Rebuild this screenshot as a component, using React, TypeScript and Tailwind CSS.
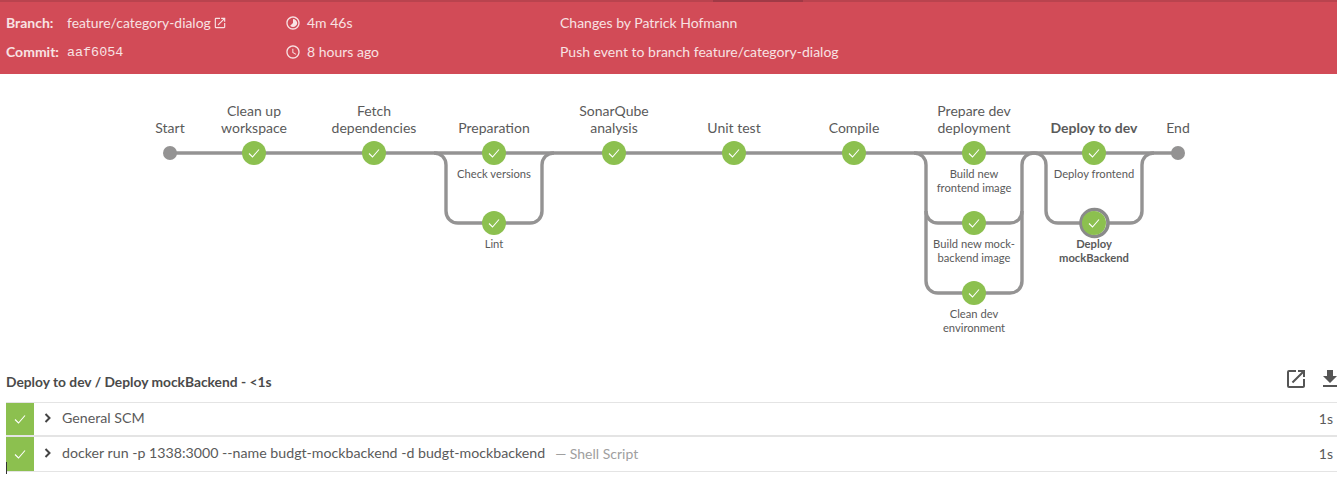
import React from "react";
import { MdAccessTime, MdFileDownload, MdOpenInNew, MdTimelapse } from "react-icons/md";

const stages = [
  { x: 170, label: ["Start"] },
  { x: 254, label: ["Clean up", "workspace"] },
  { x: 374, label: ["Fetch", "dependencies"] },
  { x: 494, label: ["Preparation"] },
  { x: 614, label: ["SonarQube", "analysis"] },
  { x: 734, label: ["Unit test"] },
  { x: 854, label: ["Compile"] },
  { x: 974, label: ["Prepare dev", "deployment"] },
  { x: 1094, label: ["Deploy to dev"], bold: true },
  { x: 1178, label: ["End"] },
];

const jobs = [
  { x: 494, y: 153, label: ["Check versions"] },
  { x: 494, y: 223, label: ["Lint"] },
  { x: 974, y: 153, label: ["Build new", "frontend image"] },
  { x: 974, y: 223, label: ["Build new mock-", "backend image"] },
  { x: 974, y: 293, label: ["Clean dev", "environment"] },
  { x: 1094, y: 153, label: ["Deploy frontend"] },
  { x: 1094, y: 223, label: ["Deploy", "mockBackend"], bold: true },
];

const nodes = [
  [254, 153], [374, 153], [494, 153], [494, 223], [614, 153], [734, 153], [854, 153],
  [974, 153], [974, 223], [974, 293], [1094, 153], [1094, 223],
];

const lines = [
  "M170 153H1178",
  "M434 153H434C441 153 446 158 446 165V211C446 218 451 223 458 223H530C537 223 542 218 542 211V165C542 158 547 153 554 153",
  "M914 153C921 153 926 158 926 165V211C926 218 931 223 938 223H1010C1017 223 1022 218 1022 211V165C1022 158 1027 153 1034 153",
  "M926 211V281C926 288 931 293 938 293H1010C1017 293 1022 288 1022 281V211",
  "M1034 153C1041 153 1046 158 1046 165V211C1046 218 1051 223 1058 223H1130C1137 223 1142 218 1142 211V165C1142 158 1147 153 1154 153",
];

const Check = ({ className }: { className?: string }) => (
  <svg viewBox="0 0 14 14" className={className} fill="none" stroke="white" strokeWidth="1.1">
    <path d="M2 7.5L5.5 11L12 3.5" />
  </svg>
);

const Chevron = () => (
  <svg viewBox="0 0 10 12" className="w-[10px] h-3" fill="none" stroke="#444444" strokeWidth="2">
    <path d="M2.5 2L6.5 6L2.5 10" />
  </svg>
);

const Row = ({ text, extra, first }: { text: string; extra?: string; first?: boolean }) => (
  <div className={`flex items-center ${first ? "h-[34px] border-b-2" : "h-[35px] border-b"} border-[#e4e4e4]`}>
    <div className="w-7 h-full bg-[#8cc04f] flex items-center justify-center">
      <Check className="w-[14px] h-[14px]" />
    </div>
    <div className="flex-1 h-full flex items-center pb-[2px]">
      <div className="ml-[9px] mr-[9px] flex items-center">
        <Chevron />
      </div>
      <span className="text-[14.2px] text-[#5a5a5a]">{text}</span>
      {extra && <span className="ml-[10px] text-[#a0a0a0] text-[14px]">{extra}</span>}
      <span className="ml-auto mr-1 text-[14px] text-[#5a5a5a]">1s</span>
    </div>
  </div>
);

export default function App() {
  return (
    <div className="h-[484px] overflow-hidden bg-white text-[14px] font-['Lato','Noto_Sans',sans-serif]">
      <div className="relative h-[74px] bg-[#d24b57] text-[#f8e2e3] pt-[8px] pl-[6px]">
        <div className="absolute top-0 left-0 right-0 h-[2px] bg-[#b9434e]">
          <div className="ml-[713px] w-[90px] h-full bg-[#a03a46]" />
        </div>
        <div className="grid grid-cols-[61px_218px_22px_253px_1fr] auto-rows-[29px] items-center h-[58px] leading-5">
          <b className="font-bold">Branch:</b>
          <div className="flex items-center gap-[2px] text-[13.9px]">
            feature/category-dialog <MdOpenInNew className="w-[14px] h-[14px]" />
          </div>
          <MdTimelapse className="w-4 h-4" />
          <span>4m 46s</span>
          <span>Changes by Patrick Hofmann</span>
          <b className="font-bold">Commit:</b>
          <span className="font-['Liberation_Mono',monospace] text-[13.4px] pt-[2px]">aaf6054</span>
          <MdAccessTime className="w-4 h-4" />
          <span>8 hours ago</span>
          <span>Push event to branch feature/category-dialog</span>
        </div>
      </div>

      <div className="relative h-[282px] text-[#5a5a5a]">
        <svg width="1337" height="282" viewBox="0 74 1337 282" className="absolute inset-0" fill="none">
          {lines.map((d) => (
            <path key={d} d={d} stroke="#949393" strokeWidth="3.4" />
          ))}
          <circle cx="170" cy="153" r="7" fill="#949393" />
          <circle cx="1178" cy="153" r="7" fill="#949393" />
          <circle cx="1094.5" cy="223" r="13.5" fill="white" stroke="#8a8a8a" strokeWidth="3.6" />
          {nodes.map(([x, y]) => (
            <g key={`${x}-${y}`}>
              <circle cx={x} cy={y} r="12" fill="#8cc04f" />
              <path d={`M${x - 5} ${y + 0.5}L${x - 1.5} ${y + 4}L${x + 5} ${y - 3.5}`} stroke="white" strokeWidth="1.1" />
            </g>
          ))}
        </svg>
        {stages.map((s) => (
          <div
            key={s.x}
            style={{ left: s.x - 60 }}
            className={`absolute bottom-[220px] w-[120px] text-center leading-[17px] ${s.bold ? "font-bold" : ""}`}
          >
            {s.label.map((l) => (
              <div key={l}>{l}</div>
            ))}
          </div>
        ))}
        {jobs.map((j) => (
          <div
            key={j.label[0]}
            style={{ left: j.x - 55, top: j.y - 74 + 14 }}
            className={`absolute w-[110px] text-center text-[11.2px] leading-[14px] ${j.bold ? "font-bold" : ""}`}
          >
            {j.label.map((l) => (
              <div key={l}>{l}</div>
            ))}
          </div>
        ))}
      </div>

      <div className="relative pl-[6px]">
        <div className="flex items-center h-[46px] pt-[6px]">
          <b className="font-bold text-[13.8px] text-[#4a4a4a]">Deploy to dev / Deploy mockBackend - &lt;1s</b>
          <MdOpenInNew className="ml-auto -mt-[6px] w-6 h-6 text-[#555555]" />
          <MdFileDownload className="ml-[10px] -mt-[6px] -mr-[5px] w-6 h-6 text-[#555555]" />
        </div>
        <div className="border-t border-[#e4e4e4]">
          <Row text="General SCM" first />
          <Row text="docker run -p 1338:3000 --name budgt-mockbackend -d budgt-mockbackend" extra="— Shell Script" />
        </div>
        <div className="absolute left-[6px] top-[106px] w-px h-[12px] bg-[#333333]" />
      </div>
    </div>
  );
}
